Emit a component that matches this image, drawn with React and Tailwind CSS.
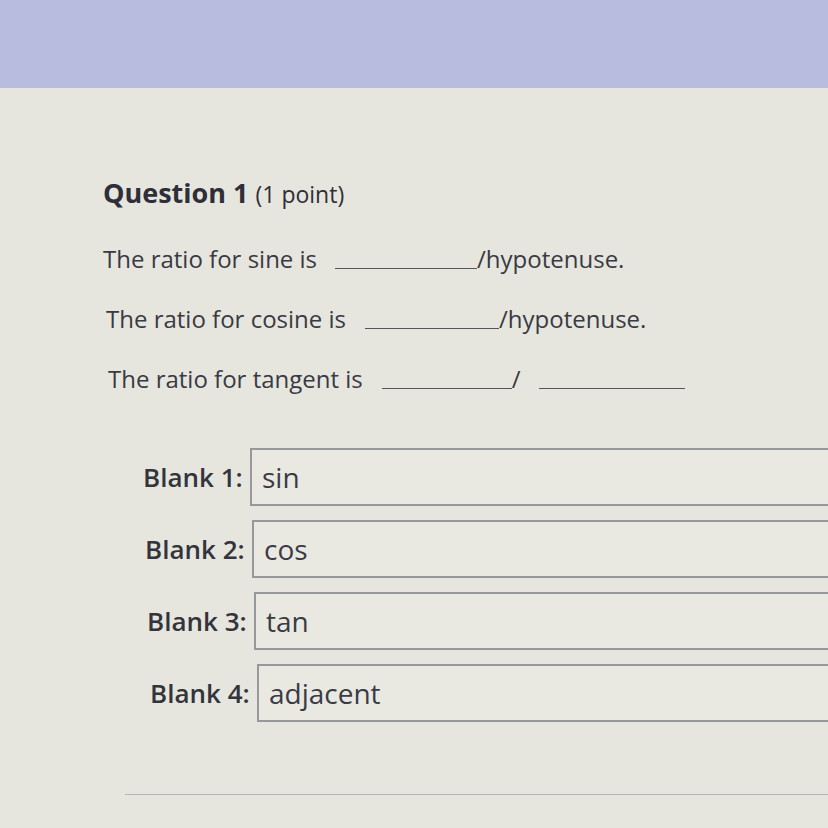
import React from "react";

const blanks = [
  { label: "Blank 1:", value: "sin", shift: "ml-[143px]" },
  { label: "Blank 2:", value: "cos", shift: "ml-[145px]" },
  { label: "Blank 3:", value: "tan", shift: "ml-[147px]" },
  { label: "Blank 4:", value: "adjacent", shift: "ml-[150px]" },
];

export default function App() {
  return (
    <div
      className="w-[828px] h-[828px] overflow-hidden bg-[#e6e6de] text-[#393a44]"
      style={{ fontFamily: '"Open Sans", "Noto Sans", sans-serif' }}
    >
      {/* top band */}
      <div className="h-[88px] bg-[#b8bcdf]" />

      <div className="pt-[88px] pl-[103px]">
        <h2 className="text-[27px] leading-[34px] font-bold text-[#2e2f38]">
          Question 1 <span className="text-[23px] font-normal">(1 point)</span>
        </h2>

        {/* sentences */}
        <div className="mt-[33px] flex flex-col gap-[30px] text-[24px] leading-[30px]">
          <p className="flex items-end">
            The ratio for sine is
            <span className="inline-block ml-[18px] w-[142px] border-b border-[#55555a] mb-[5px]" />
            <span>/hypotenuse.</span>
          </p>
          <p className="flex items-end ml-[3px]">
            The ratio for cosine is
            <span className="inline-block ml-[19px] w-[134px] border-b border-[#55555a] mb-[5px]" />
            <span>/hypotenuse.</span>
          </p>
          <p className="flex items-end ml-[5px]">
            The ratio for tangent is
            <span className="inline-block ml-[19px] w-[130px] border-b border-[#55555a] mb-[5px]" />
            <span>/</span>
            <span className="inline-block ml-[18px] w-[146px] border-b border-[#55555a] mb-[5px]" />
          </p>
        </div>
      </div>

      {/* blank inputs */}
      <div className="mt-[54px] flex flex-col gap-[14px]">
        {blanks.map((b) => (
          <div key={b.label} className={`flex items-center ${b.shift}`}>
            <span className="w-[107px] text-[26px] font-semibold text-[#33343c]">{b.label}</span>
            <div className="flex-1 h-[58px] border-2 border-r-0 border-[#96989c] bg-[#e9e9e2] flex items-center pl-[10px] text-[28px] text-[#3a3b46]">
              {b.value}
            </div>
          </div>
        ))}
      </div>

      <div className="mt-[72px] ml-[125px] border-t border-[#b4b4b8]" />
    </div>
  );
}
